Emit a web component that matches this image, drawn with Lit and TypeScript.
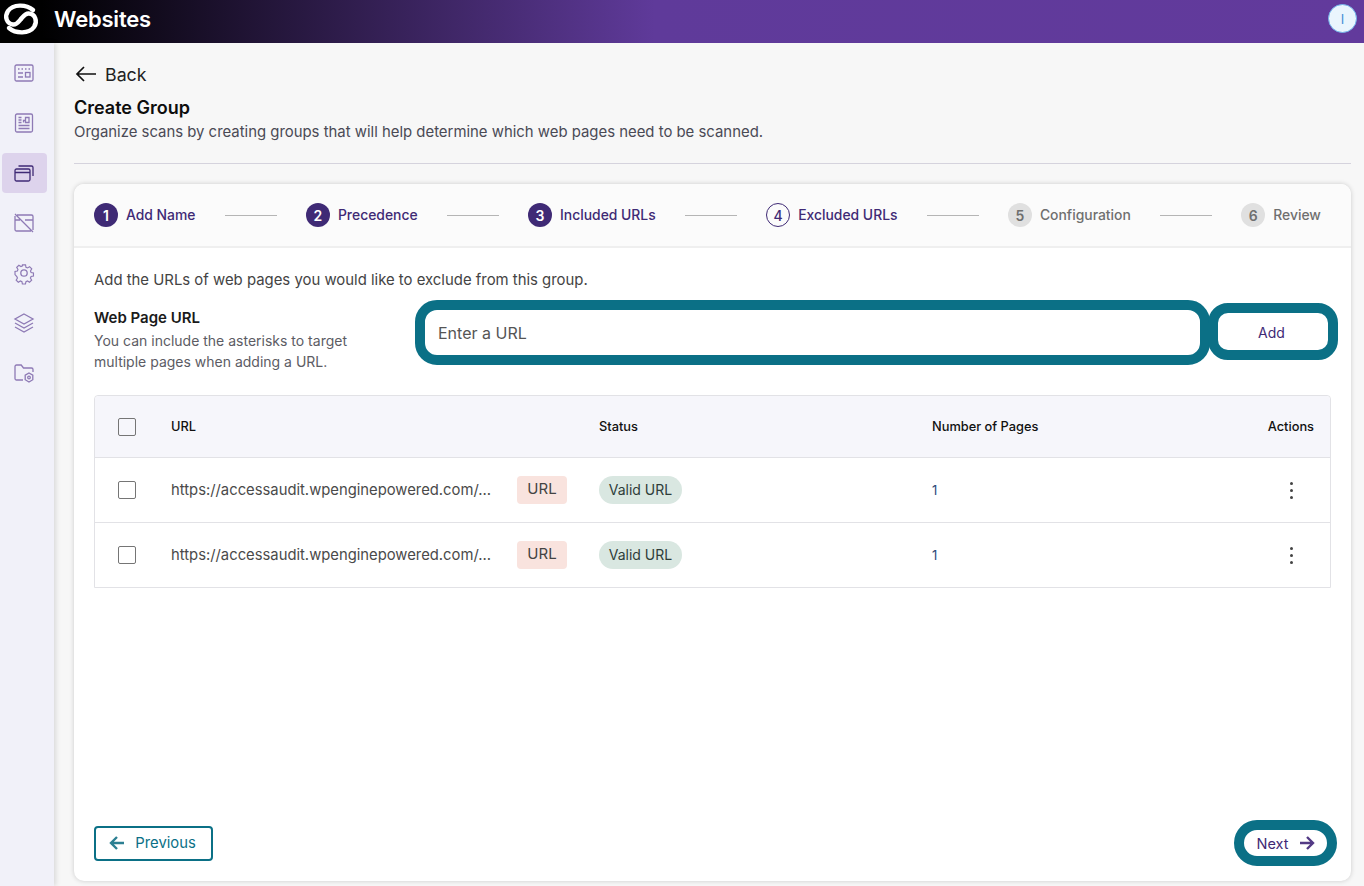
import { LitElement, html, css, svg } from 'lit';
import { customElement } from 'lit/decorators.js';

const navIcons = [
  svg`<rect x="3" y="4" width="18" height="16" rx="1.5"/><path d="M6 8h1.5M9.500 8H11M13 8h1.500M16.500 8H18M6 12h5M6 16h5"/><rect x="13.500" y="11.500" width="4.500" height="4.500"/>`,
  svg`<rect x="3.500" y="3" width="17" height="18" rx="1.500"/><path d="M6.500 6.500h3M6.500 9h3M6.500 11.500h3M6.500 14.500h11M6.500 17.500h11M11.500 11.500V9.500h2v2M13.500 11.500V6.500h3.500v5z"/>`,
  svg`<rect x="3" y="8" width="15" height="12" rx="1.500"/><path d="M3 11.500h15M6.500 5h13a1.500 1.500 0 0 1 1.500 1.500V15"/>`,
  svg`<path d="M5 4h14.500A1.500 1.500 0 0 1 21 5.500V19M19 20H4.500A1.500 1.500 0 0 1 3 18.500V5M3 9h5M13 9h8M3 3l18 18"/>`,
  svg`<circle cx="12" cy="12" r="3.200"/><path d="M10.300 3h3.400l.5 2.600 1.700.8 2.300-1.400 2.400 2.400-1.400 2.300.7 1.700 2.600.6v3.400l-2.600.5-.8 1.700 1.400 2.300-2.400 2.400-2.200-1.400-1.700.7-.6 2.600h-3.400l-.5-2.600-1.700-.7-2.300 1.400-2.400-2.400 1.400-2.300-.7-1.700L2 13.700v-3.400l2.600-.5.7-1.700-1.400-2.300 2.400-2.400 2.300 1.400 1.700-.7z" transform="translate(1.200 1.200) scale(.9)"/>`,
  svg`<path d="M12 3l9 5-9 5-9-5zM3 12l9 5 9-5M3 16l9 5 9-5"/>`,
  svg`<path d="M11 19H4.500A1.500 1.500 0 0 1 3 17.500v-12A1.500 1.500 0 0 1 4.500 4h4.700l2.300 3h8A1.500 1.500 0 0 1 21 8.500V11"/><circle cx="17" cy="16.500" r="1.300"/><path d="M17 12l3.800 2.200v4.500L17 21l-3.800-2.300v-4.500z"/>`,
];

const steps = [
  { n: 1, label: 'Add Name', state: 'done' },
  { n: 2, label: 'Precedence', state: 'done' },
  { n: 3, label: 'Included URLs', state: 'done' },
  { n: 4, label: 'Excluded URLs', state: 'current' },
  { n: 5, label: 'Configuration', state: 'todo' },
  { n: 6, label: 'Review', state: 'todo' },
];

const rows = [
  'https://accessaudit.wpenginepowered.com/...',
  'https://accessaudit.wpenginepowered.com/...',
];

@customElement('app-root')
export class AppRoot extends LitElement {
  static styles = css`
    :host {
      display: block;
      height: 886px;
      overflow: hidden;
      font-family: Inter, 'Noto Sans', sans-serif;
      color: #1c1c1c;
      background: #f7f7f7;
    }

    * {
      box-sizing: border-box;
    }

    .topbar {
      height: 43px;
      display: flex;
      align-items: center;
      padding: 0 7px 6px 0;
      background: linear-gradient(90deg, #000 0%, #000 3%, #5f3a9a 48%, #623a9c 100%);
      color: #fff;
    }

    .logo {
      width: 42px;
      height: 36px;
      flex: none;
    }

    .app-name {
      margin-left: 12px;
      font-size: 22px;
      font-weight: 600;
      letter-spacing: -0.2px;
    }

    .avatar {
      margin-left: auto;
      width: 29px;
      height: 29px;
      border-radius: 50%;
      background: #eaf5fd;
      border: 1.5px solid #6fb2ea;
      color: #3f8fd8;
      font-size: 13px;
      display: flex;
      align-items: center;
      justify-content: center;
    }

    .shell {
      display: flex;
      height: 843px;
    }

    .side {
      width: 54px;
      flex: none;
      background: #f1f1f9;
      box-shadow: 2px 0 5px rgba(0, 0, 0, 0.12);
      padding: 10px 0 0 2px;
      display: flex;
      flex-direction: column;
      gap: 10px;
    }

    .nav {
      width: 45px;
      height: 40px;
      padding-right: 2px;
      border-radius: 4px;
      display: flex;
      align-items: center;
      justify-content: center;
    }

    .nav.on {
      background: #ddd3ec;
    }

    .nav svg {
      width: 24px;
      height: 24px;
      fill: none;
      stroke: #8e7ab5;
      stroke-width: 1.3;
    }

    .nav.on svg {
      stroke: #3f2a75;
    }

    .main {
      flex: 1;
      padding: 19px 13px 5px 20px;
      display: flex;
      flex-direction: column;
      min-width: 0;
    }

    .back {
      display: flex;
      align-items: center;
      gap: 8px;
      height: 24px;
      font-size: 17.800px;
      color: #222;
      padding-left: 1px;
    }

    .back svg {
      width: 22px;
      height: 18px;
      fill: none;
      stroke: #111;
      stroke-width: 1.700;
    }

    h1 {
      margin: 10px 0 0;
      font-size: 18px;
      line-height: 24px;
      font-weight: 600;
      color: #0d0d0d;
    }

    .sub {
      margin: 2px 0 0;
      font-size: 14.900px;
      line-height: 20px;
      color: #4a4a55;
    }

    .rule {
      height: 1px;
      margin-top: 21px;
      background: #d5d3dd;
      flex: none;
    }

    .card {
      margin-top: 20px;
      flex: 1;
      background: #fff;
      border-radius: 10px;
      box-shadow: 0 0 5px rgba(0, 0, 0, 0.18);
      display: flex;
      flex-direction: column;
      min-height: 0;
    }

    .stepper {
      height: 64px;
      flex: none;
      display: flex;
      align-items: center;
      justify-content: space-between;
      padding: 0 30px 0 20px;
      background: #fbfbfb;
      border-bottom: 2px solid #efefef;
      border-radius: 10px 10px 0 0;
    }

    .step {
      display: flex;
      align-items: center;
      gap: 8px;
      font-size: 13.900px;
      font-weight: 500;
      color: #3f2a75;
    }

    .step .num {
      width: 24px;
      height: 24px;
      border-radius: 50%;
      display: flex;
      align-items: center;
      justify-content: center;
      font-size: 14px;
      font-weight: 600;
      background: #3f2a75;
      color: #fff;
    }

    .step.current .num {
      background: #fbfbfb;
      border: 1px solid #3f2a75;
      color: #3f2a75;
      font-weight: 500;
    }

    .step.todo {
      color: #6f6f6f;
    }

    .step.todo .num {
      background: #e0e0e0;
      color: #6f6f6f;
    }

    .link {
      width: 52px;
      height: 1px;
      background: #b5b5b5;
    }

    .body {
      flex: 1;
      display: flex;
      flex-direction: column;
      padding: 22px 20px 15px;
      min-height: 0;
    }

    .lead {
      margin: 0;
      font-size: 14.900px;
      line-height: 20px;
      color: #444;
    }

    .form {
      display: flex;
      margin-top: 10px;
      margin-right: -7px;
    }

    .help {
      width: 321px;
      flex: none;
      padding-top: 8px;
    }

    .help b {
      display: block;
      font-size: 15px;
      line-height: 20px;
      font-weight: 600;
      color: #1a1a1a;
    }

    .help span {
      display: block;
      margin-top: 2px;
      font-size: 14px;
      line-height: 21px;
      color: #5c5c64;
    }

    .input {
      width: 795px;
      height: 65px;
      flex: none;
      border: 10px solid #0b7086;
      border-radius: 22px;
      background: #fff;
      display: flex;
      align-items: center;
      padding-left: 13px;
      font-size: 16px;
      color: #555;
    }

    .add {
      width: 130px;
      height: 57px;
      flex: none;
      margin: 3px 0 0 -2px;
      padding: 1px 3px 0 0;
      border: 10px solid #0b7086;
      border-radius: 20px;
      background: #fff;
      display: flex;
      align-items: center;
      justify-content: center;
      font-size: 14px;
      color: #3f2a75;
    }

    .table {
      margin-top: 23px;
      border: 1px solid #e2e2e6;
      border-radius: 4px 4px 0 0;
    }

    .tr {
      display: grid;
      grid-template-columns: 76px 346px 82px 333px 1fr;
      align-items: center;
      height: 65px;
      border-top: 1px solid #e2e2e6;
      font-size: 13px;
      color: #333;
    }

    .tr.head {
      height: 61px;
      border-top: 0;
      background: #f6f6fb;
      font-size: 12.800px;
      font-weight: 500;
      color: #111;
      border-radius: 4px 4px 0 0;
    }

    .box {
      width: 18px;
      height: 18px;
      margin-left: 23px;
      border: 1.500px solid #757575;
      border-radius: 2px;
      background: #fff;
    }

    .head .box {
      background: #f6f6fb;
    }

    .url {
      font-size: 14.800px;
      color: #4a4a4a;
      white-space: nowrap;
    }

    .tag {
      display: block;
      width: 50px;
      height: 28px;
      line-height: 26px;
      text-align: center;
      font-size: 15px;
      color: #444;
      background: #f9e3de;
      border-radius: 4px;
    }

    .pill {
      display: block;
      width: 83px;
      height: 28px;
      line-height: 28px;
      text-align: center;
      font-size: 14px;
      color: #2f3d3a;
      background: #d9e7e1;
      border-radius: 14px;
    }

    .count {
      color: #2e4a78;
    }

    .last {
      display: flex;
      justify-content: space-between;
      align-items: center;
    }

    .head .last {
      padding-right: 16px;
    }

    .kebab {
      display: flex;
      flex-direction: column;
      gap: 4px;
      padding-right: 37px;
    }

    .kebab i {
      display: block;
      width: 3px;
      height: 3px;
      border-radius: 50%;
      background: #444;
    }

    .footer {
      margin-top: auto;
      display: flex;
      align-items: center;
      justify-content: space-between;
      margin-right: -6px;
    }

    .prev {
      width: 119px;
      height: 35px;
      border: 2px solid #0b7086;
      border-radius: 4px;
      display: flex;
      align-items: center;
      justify-content: center;
      gap: 10px;
      font-size: 14.800px;
      padding-right: 2px;
      color: #0b7086;
      background: #fff;
    }

    .next {
      width: 103px;
      height: 46px;
      border: 10px solid #0b7086;
      border-radius: 23px;
      display: flex;
      align-items: center;
      justify-content: center;
      gap: 10px;
      font-size: 14.500px;
      color: #3f2a75;
      background: #fff;
    }

    .arrow {
      width: 16px;
      height: 16px;
      fill: none;
      stroke: currentColor;
      stroke-width: 2.400;
    }

    .prev .arrow {
      stroke: #2c7f92;
    }

    .next .arrow {
      stroke: #533a85;
    }
  `;

  private _step(s: { n: number; label: string; state: string }) {
    return html`<div class="step ${s.state}">
      <span class="num">${s.n}</span><span>${s.label}</span>
    </div>`;
  }

  render() {
    return html`
      <header class="topbar">
        <svg class="logo" viewBox="0 0 42 36" fill="none" stroke="#fff" stroke-width="4.400" stroke-linecap="round">
          <path d="M33 9C26 3 13 3 8 10 4 16 7 23 13 23.500c4 .5 6-3.500 8-5.500" />
          <path d="M9 27c7 6 20 6 25-1 4-6 1-13-5-13.500-4-.5-6 3.500-8 5.500" />
        </svg>
        <span class="app-name">Websites</span>
        <div class="avatar">I</div>
      </header>
      <div class="shell">
        <nav class="side">
          ${navIcons.map(
            (icon, i) => html`<div class="nav ${i === 2 ? 'on' : ''}">
              <svg viewBox="0 0 24 24">${icon}</svg>
            </div>`
          )}
        </nav>
        <main class="main">
          <div class="back">
            <svg viewBox="0 0 22 18"><path d="M21 9H2M9 2L2 9l7 7" /></svg>
            <span>Back</span>
          </div>
          <h1>Create Group</h1>
          <p class="sub">Organize scans by creating groups that will help determine which web pages need to be scanned.</p>
          <div class="rule"></div>
          <section class="card">
            <div class="stepper">
              ${steps.map(
                (s, i) => html`${i > 0 ? html`<div class="link"></div>` : ''}${this._step(s)}`
              )}
            </div>
            <div class="body">
              <p class="lead">Add the URLs of web pages you would like to exclude from this group.</p>
              <div class="form">
                <div class="help">
                  <b>Web Page URL</b>
                  <span>You can include the asterisks to target<br />multiple pages when adding a URL.</span>
                </div>
                <div class="input">Enter a URL</div>
                <div class="add">Add</div>
              </div>
              <div class="table">
                <div class="tr head">
                  <div class="box"></div>
                  <div>URL</div>
                  <div></div>
                  <div>Status</div>
                  <div class="last">
                    <span>Number of Pages</span><span>Actions</span>
                  </div>
                </div>
                ${rows.map(
                  (url) => html`<div class="tr">
                    <div class="box"></div>
                    <div class="url">${url}</div>
                    <div><span class="tag">URL</span></div>
                    <div><span class="pill">Valid URL</span></div>
                    <div class="last">
                      <span class="count">1</span>
                      <span class="kebab"><i></i><i></i><i></i></span>
                    </div>
                  </div>`
                )}
              </div>
              <div class="footer">
                <div class="prev">
                  <svg class="arrow" viewBox="0 0 16 16"><path d="M15 8H2M8 2L2 8l6 6" /></svg>
                  <span>Previous</span>
                </div>
                <div class="next">
                  <span>Next</span>
                  <svg class="arrow" viewBox="0 0 16 16"><path d="M1 8h13M8 2l6 6-6 6" /></svg>
                </div>
              </div>
            </div>
          </section>
        </main>
      </div>
    `;
  }
}
